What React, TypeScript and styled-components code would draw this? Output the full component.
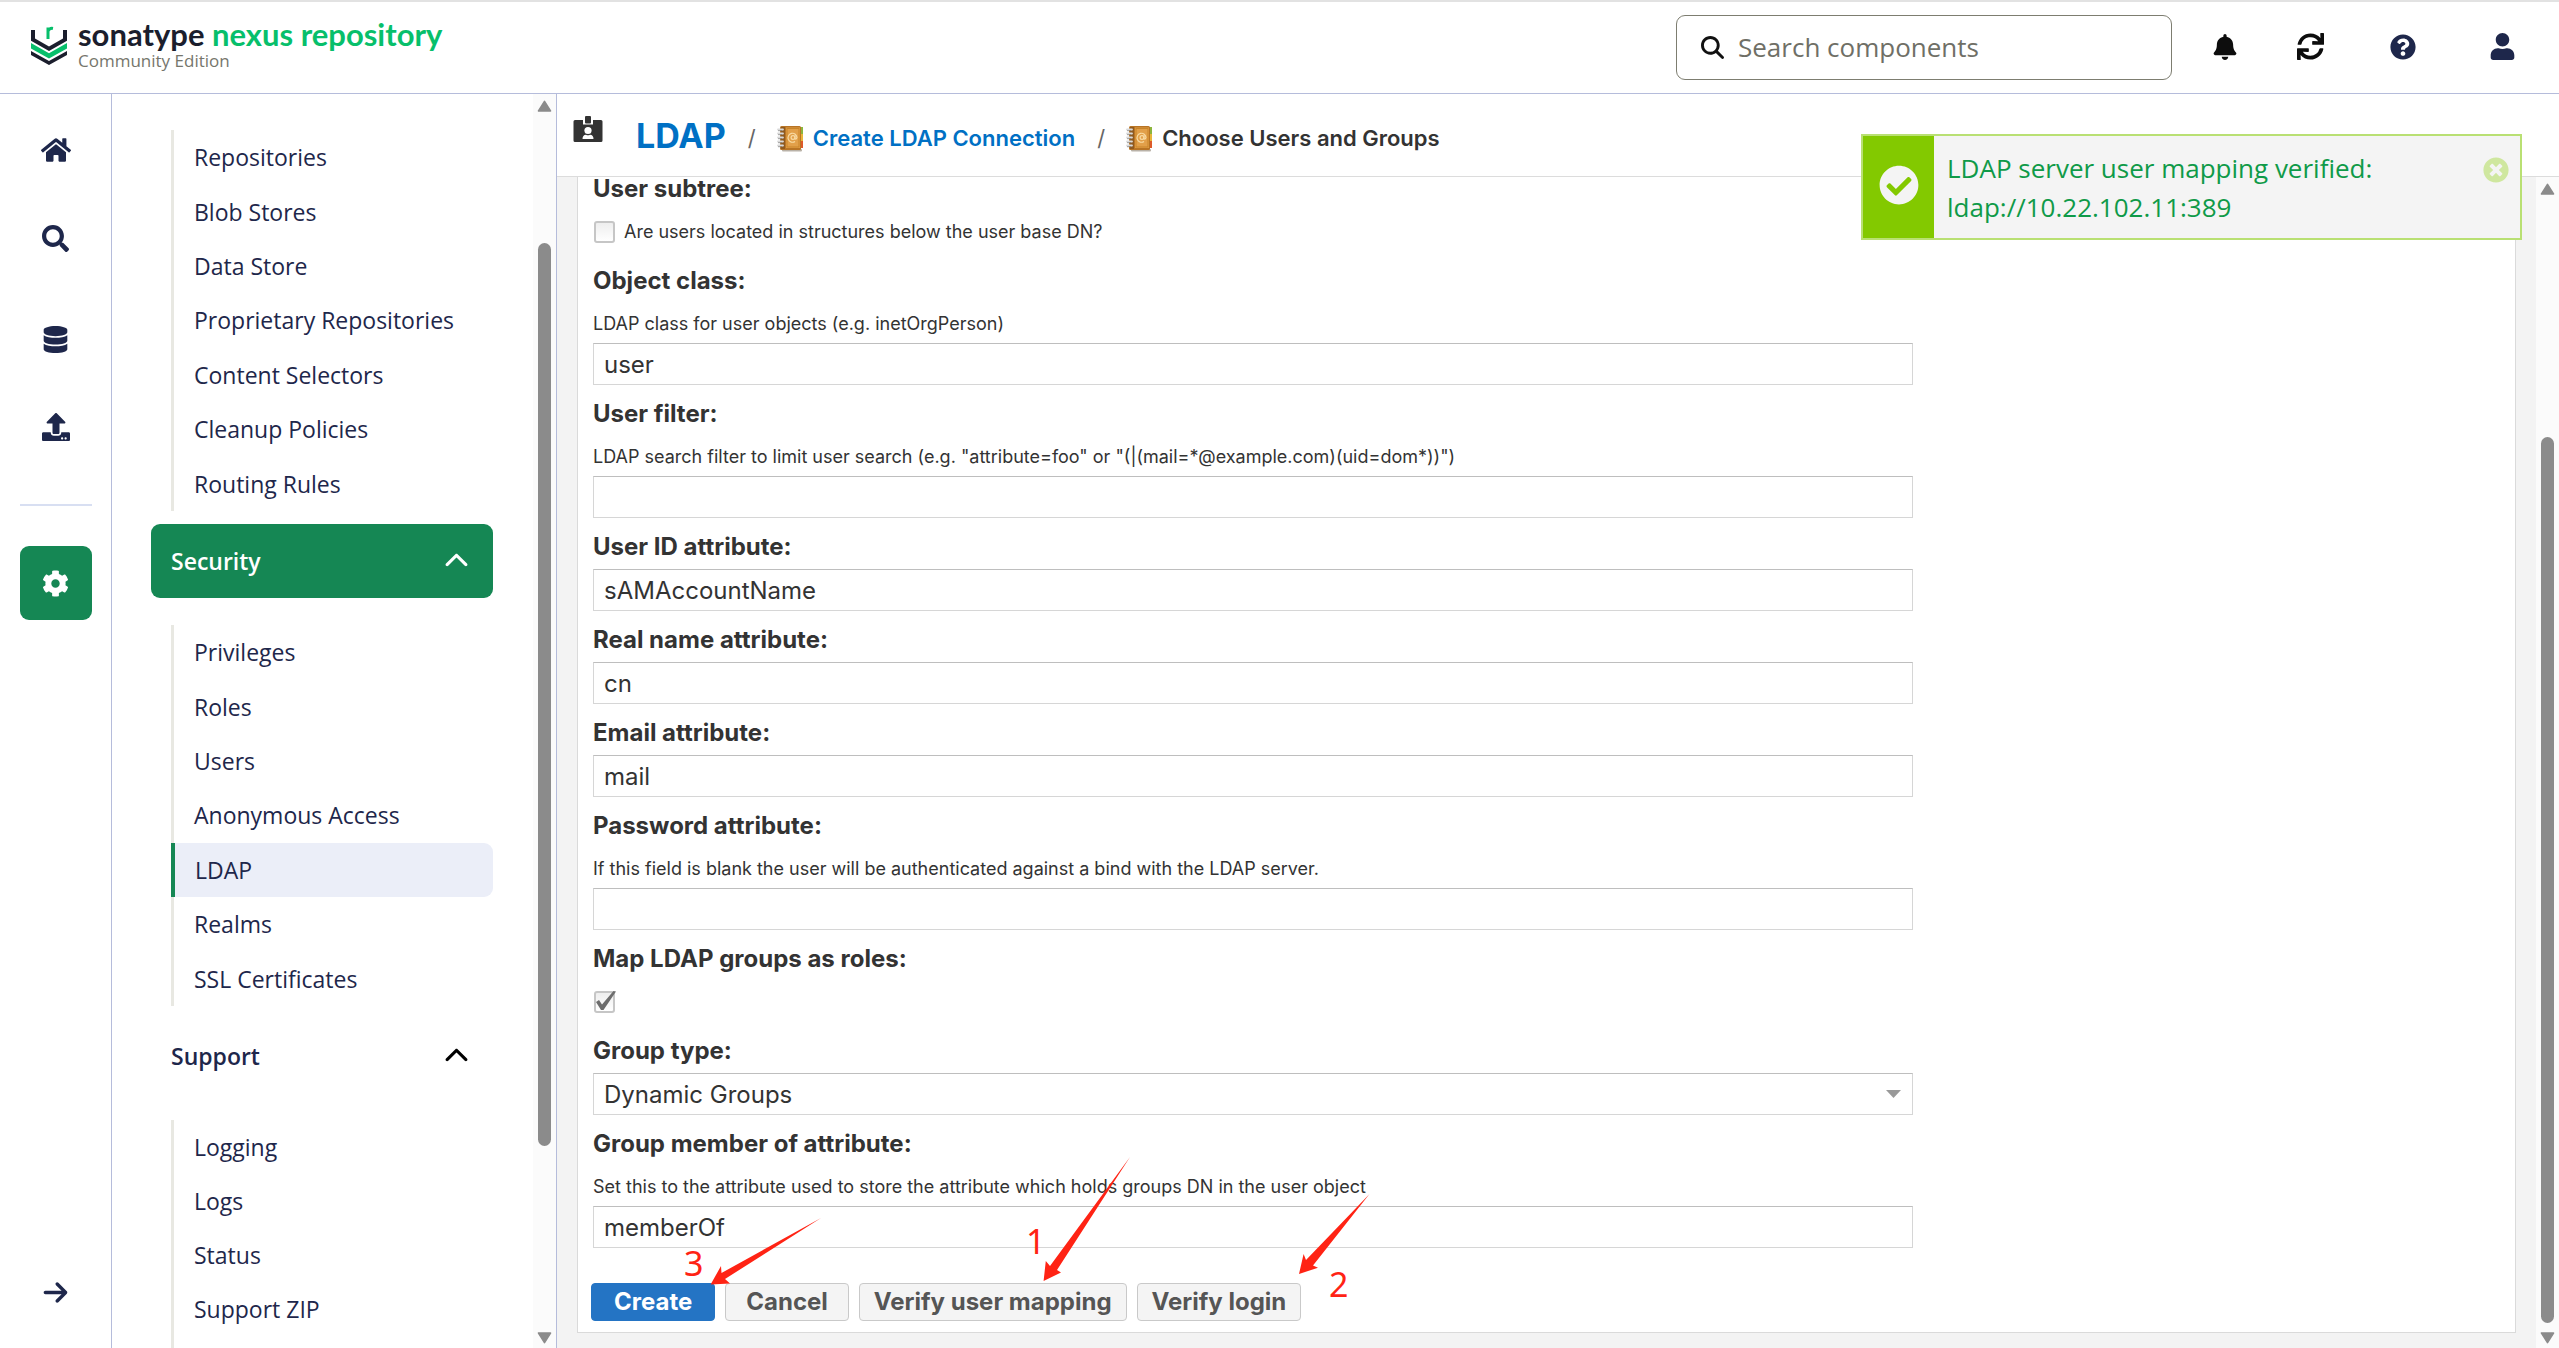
import React from 'react';
import styled, { createGlobalStyle, css } from 'styled-components';
import {
  FaBell,
  FaCheckCircle,
  FaCog,
  FaDatabase,
  FaHome,
  FaQuestionCircle,
  FaSearch,
  FaSync,
  FaTimesCircle,
  FaUpload,
  FaUser,
} from 'react-icons/fa';
import { FaArrowRight, FaChevronUp, FaMagnifyingGlass } from 'react-icons/fa6';

const sans = `'Open Sans', 'Noto Sans', sans-serif`;
const form = `Inter, 'Open Sans', sans-serif`;
const brand = `Lato, 'Open Sans', sans-serif`;

const navy = '#1e274b';
const green = '#158754';
const line = '#b5bcdb';

const GlobalStyle = createGlobalStyle`
  *, *::before, *::after { box-sizing: border-box; }
  body { margin: 0; background: #fff; font-family: ${sans}; overflow: hidden; }
  button, input, select { font: inherit; color: inherit; margin: 0; }
  a { text-decoration: none; color: inherit; }
  ul, ol { list-style: none; margin: 0; padding: 0; }
`;

const Page = styled.div`
  display: flex;
  flex-direction: column;
  height: 100vh;
  border-top: 2px solid #e2e2e2;
`;

/* ---------- top bar ---------- */

const TopBar = styled.header`
  display: flex;
  align-items: center;
  justify-content: space-between;
  flex: none;
  height: 92px;
  padding: 0 39px 0 30px;
  border-bottom: 1px solid ${line};
`;

const Brand = styled.a`
  display: flex;
  align-items: center;
  gap: 10px;
  padding-bottom: 8px;
`;

const BrandName = styled.div`
  font: 700 31px/34px ${brand};
  color: #1b1e2d;
  span { color: #07bf6b; }
`;

const Edition = styled.div`
  font-size: 17px;
  line-height: 20px;
  color: #76766c;
`;

const Tools = styled.div`
  display: flex;
  align-items: center;
`;

const SearchBox = styled.label`
  display: flex;
  align-items: center;
  gap: 14px;
  width: 496px;
  height: 65px;
  margin-right: 35px;
  padding: 0 24px;
  border: 1px solid #7d7d70;
  border-radius: 9px;
  color: #111;
  input {
    flex: 1;
    min-width: 0;
    padding: 0 0 2px;
    border: 0;
    outline: 0;
    background: none;
    font-size: 26px;
  }
  input::placeholder { color: #6f6f66; opacity: 1; }
`;

const IconButton = styled.button<{ $navy?: boolean; $gap?: number }>`
  display: flex;
  align-items: center;
  justify-content: center;
  width: 36px;
  height: 40px;
  margin-left: ${p => p.$gap ?? 0}px;
  padding: 0 0 2px;
  border: 0;
  background: none;
  color: ${p => (p.$navy ? navy : '#0d0d0d')};
`;

/* ---------- body ---------- */

const Body = styled.div`
  display: flex;
  flex: 1;
  min-height: 0;
`;

const Rail = styled.nav`
  display: flex;
  flex-direction: column;
  align-items: center;
  flex: none;
  width: 112px;
  padding: 19px 0 19px;
  border-right: 1px solid ${line};
`;

const RailLink = styled.a<{ $active?: boolean; $gap?: number }>`
  display: flex;
  align-items: center;
  justify-content: center;
  width: 72px;
  height: 74px;
  margin-top: ${p => p.$gap ?? 0}px;
  border-radius: 9px;
  color: ${p => (p.$active ? '#fff' : navy)};
  background: ${p => (p.$active ? green : 'transparent')};
`;

const RailRule = styled.hr`
  width: 72px;
  margin: 40px 0 0;
  border: 0;
  border-top: 2px solid #d8dff2;
`;

const RailSpacer = styled.div`
  flex: 1;
`;

const Sidebar = styled.nav`
  display: flex;
  flex: none;
  width: 445px;
  border-right: 1px solid ${line};
`;

const Menu = styled.div`
  display: flex;
  flex-direction: column;
  flex: 1;
  overflow: hidden;
  padding: 36px 40px 0 39px;
`;

const MenuList = styled.ul<{ $open?: boolean }>`
  display: grid;
  grid-auto-rows: ${p => (p.$open ? '54px' : '1fr')};
  flex: ${p => (p.$open ? '1 0 auto' : '0 0 381px')};
  margin-left: 20px;
  border-left: 3px solid #e8e8e2;
`;

const MenuLink = styled.a<{ $active?: boolean }>`
  display: flex;
  align-items: center;
  height: 100%;
  padding: 0 0 0 20px;
  font-size: 23px;
  color: ${navy};
  ${p =>
    p.$active &&
    css`
      margin-left: -3px;
      border-left: 4px solid ${green};
      border-radius: 0 9px 9px 0;
      background: #ebeef8;
      font-weight: 500;
    `}
`;

const MenuHeader = styled.button<{ $active?: boolean }>`
  display: flex;
  align-items: center;
  justify-content: space-between;
  flex: none;
  height: 74px;
  margin: 13px 0 27px;
  padding: 0 24px 0 20px;
  border: 0;
  border-radius: 9px;
  font-size: 23px;
  font-weight: 600;
  color: ${p => (p.$active ? '#fff' : navy)};
  background: ${p => (p.$active ? green : 'none')};
  svg { color: ${p => (p.$active ? '#fff' : '#000')}; }
`;

/* ---------- scrollbars ---------- */

const Track = styled.div`
  display: flex;
  flex-direction: column;
  align-items: center;
  flex: none;
  width: 23px;
  padding: 6px 0 4px;
  background: #fbfbfb;
`;

const Thumb = styled.div<{ $grow: number }>`
  flex: ${p => p.$grow} 0 0;
  width: 13px;
  border-radius: 7px;
  background: #8b8b8b;
`;

const TrackGap = styled.div<{ $grow: number }>`
  flex: ${p => p.$grow} 0 0;
`;

const TrackArrow = ({ down }: { down?: boolean }) => (
  <svg width="15" height="12" viewBox="0 0 15 12" aria-hidden="true">
    <path
      d={down ? 'M1.5 1h12L7.5 10.6z' : 'M1.5 11h12L7.5 1.4z'}
      fill="#8b8b8b"
      stroke="#8b8b8b"
      strokeWidth="1.6"
      strokeLinejoin="round"
    />
  </svg>
);

const Scrollbar = ({ before, size, after }: { before: number; size: number; after: number }) => (
  <Track>
    <TrackArrow />
    <TrackGap $grow={before} />
    <Thumb $grow={size} />
    <TrackGap $grow={after} />
    <TrackArrow down />
  </Track>
);

/* ---------- content ---------- */

const Content = styled.main`
  position: relative;
  display: flex;
  flex-direction: column;
  flex: 1;
  min-width: 0;
  font-family: ${form};
  color: #333;
`;

const Crumbs = styled.header`
  flex: none;
  height: 83px;
  padding-left: 16px;
  border-bottom: 1px solid #dcdcdc;
  ol { display: flex; align-items: center; height: 88px; }
  li { display: flex; align-items: center; font-size: 22px; font-weight: 600; }
  li + li::before {
    content: '/';
    width: 8px;
    margin: 0 21px 0 22px;
    font-weight: 400;
    color: #666;
  }
`;

const Title = styled.h1`
  display: flex;
  align-items: center;
  gap: 33px;
  margin: 0 0 5px;
  font-size: 34px;
  line-height: 40px;
  > svg { align-self: flex-start; }
`;

const CrumbLink = styled.a`
  color: #0070c4;
`;

const CrumbIcon = styled.span`
  display: flex;
  margin-right: 9px;
`;

const Scroller = styled.div`
  display: flex;
  flex: 1;
  min-height: 0;
`;

const Viewport = styled.div`
  display: flex;
  flex-direction: column;
  justify-content: flex-end;
  flex: 1;
  min-width: 0;
  overflow: hidden;
  padding: 0 20px 15px 20px;
  background: #f3f3f3;
`;

const Panel = styled.form`
  flex: none;
  padding: 12px 602px 11px 15px;
  border: 1px solid #dadada;
  background: #fff;
`;

const Field = styled.div`
  display: flex;
  flex-direction: column;
  margin-bottom: 13px;
`;

const Label = styled.label`
  height: 38px;
  padding-top: 4px;
  font-size: 24px;
  line-height: 24px;
  font-weight: 700;
`;

const Help = styled.span`
  padding-top: 2px;
  font-size: 18px;
  line-height: 38px;
  white-space: nowrap;
`;

const boxed = css`
  width: 100%;
  height: 42px;
  padding: 0 10px;
  border: 1px solid #d6d6d6;
  border-top-color: #bebebe;
  border-radius: 0;
  outline: 0;
  background: #fff;
  font-size: 24px;
`;

const TextInput = styled.input`
  ${boxed}
`;

const SelectWrap = styled.div`
  display: grid;
  align-items: center;
  > * { grid-area: 1 / 1; }
  svg { justify-self: end; margin-right: 12px; pointer-events: none; }
`;

const Select = styled.select`
  ${boxed}
  appearance: none;
`;

const CheckRow = styled.label`
  display: flex;
  align-items: center;
  gap: 8px;
  height: 41px;
  font-size: 18px;
  white-space: nowrap;
`;

const CheckBox = styled.span`
  display: grid;
  width: 23px;
  height: 24px;
  > * { grid-area: 1 / 1; }
  input {
    appearance: none;
    align-self: center;
    justify-self: center;
    width: 21px;
    height: 22px;
    border: 2px solid #c6c6c6;
    border-radius: 3px;
    background: linear-gradient(#eee, #fff);
  }
  svg { pointer-events: none; overflow: visible; }
`;

const Actions = styled.div`
  display: flex;
  gap: 10px;
  margin: 35px 0 0 -2px;
`;

const Button = styled.button<{ $primary?: boolean; $pad: number }>`
  height: 38px;
  padding: 0 ${p => p.$pad}px;
  border: 1px solid ${p => (p.$primary ? '#2474c4' : '#c9c9c9')};
  border-radius: 4px;
  background: ${p => (p.$primary ? '#2474c4' : '#f4f4f4')};
  color: ${p => (p.$primary ? '#fff' : '#555')};
  font-size: 24px;
  line-height: 34px;
  font-weight: 700;
  white-space: nowrap;
`;

/* ---------- notification ---------- */

const Toast = styled.div`
  position: absolute;
  top: 40px;
  right: 37px;
  display: flex;
  width: 661px;
  height: 106px;
  border: 2px solid #b9e073;
  background: #f4f4f4;
  font: 26px/39px ${sans};
  color: #0f9a48;
`;

const ToastMark = styled.div`
  display: flex;
  align-items: center;
  justify-content: center;
  width: 71px;
  padding-bottom: 5px;
  color: #f4f4f4;
  background: #83c900;
`;

const ToastText = styled.p`
  flex: 1;
  margin: 0;
  padding: 13px;
  white-space: pre-line;
`;

const ToastClose = styled.button`
  align-self: flex-start;
  display: flex;
  margin: 21px 11px 0 0;
  padding: 0;
  border: 0;
  background: none;
  color: #cfe79f;
`;

/* ---------- annotations ---------- */

const Marks = styled.svg`
  position: absolute;
  left: 0;
  bottom: 0;
  pointer-events: none;
  fill: #ff2314;
  font: 34px 'Noto Sans', sans-serif;
`;

const LogoMark = () => (
  <svg width="38" height="42" viewBox="0 0 38 42" aria-hidden="true">
    <path d="M1 7h4v8.500l14 8 14-8V7h4v10.800L19 28 1 17.800z" fill="#1b1e2d" />
    <path d="M1 20 19 30.200 37 20v5.500L19 35.600 1 25.500z" fill="#07bf6b" />
    <path d="M1 28 19 38 37 28v4L19 42 1 32z" fill="#1b1e2d" />
    <path d="M18 16V4.500M18 8q1.500-3.200 5-2.600" fill="none" stroke="#07bf6b" strokeWidth="3" />
  </svg>
);

const BadgeIcon = () => (
  <svg width="30" height="27" viewBox="0 0 30 27" aria-hidden="true">
    <path
      d="M2 4h8v4.500h10V4h8a1.500 1.500 0 0 1 1.500 1.500v19A1.500 1.500 0 0 1 28 26H2A1.500 1.500 0 0 1 .5 24.500v-19A1.500 1.500 0 0 1 2 4z"
      fill="#333"
    />
    <rect x="12" y="0" width="6" height="7.500" rx="1" fill="#333" />
    <circle cx="15" cy="14.500" r="3.600" fill="#fff" />
    <path d="M9.500 23q0-4 3.500-4.200 2 1 4 0 3.500.2 3.500 4.200z" fill="#fff" />
  </svg>
);

const BookIcon = () => (
  <svg width="27" height="27" viewBox="0 0 27 27" aria-hidden="true">
    <rect x="5" y="24" width="20" height="2.500" rx="1" fill="#b9b2a8" />
    <path d="M22 2h4v7h-4z" fill="#8cb53c" />
    <path d="M22 9h4v7h-4z" fill="#e8b53a" />
    <path d="M22 16h4v7h-4z" fill="#dd5a2a" />
    <rect x="3" y="1" width="21" height="24" rx="1.500" fill="#b87425" />
    <rect x="4" y="2" width="4" height="22" fill="#8f5a20" />
    <rect x="9" y="2.500" width="14" height="20.500" fill="#e2a04a" />
    <rect x="10" y="3.500" width="12" height="18.500" fill="none" stroke="#c98428" />
    <circle cx="16" cy="12.500" r="1.900" fill="none" stroke="#f8dba4" strokeWidth="1.200" />
    <path d="M18 10.500v3q1 1.500 2-1a4.500 4.500 0 1 0-2 4" fill="none" stroke="#f8dba4" strokeWidth="1.200" />
    <path d="M1 4.500h5M1 8.500h5M1 12.500h5M1 16.500h5M1 20.500h5" stroke="#d9d9d9" strokeWidth="1.800" strokeLinecap="round" />
    <path d="M1 5.700h4M1 9.700h4M1 13.700h4M1 17.700h4M1 21.700h4" stroke="#777" strokeWidth=".7" />
  </svg>
);

const CheckStroke = () => (
  <svg width="23" height="24" viewBox="0 0 23 24" aria-hidden="true">
    <path d="M3 12 6 10 9 14.500 20.500 1 23 1.500 10.500 20 8 20z" fill="#6d6d6d" />
  </svg>
);

const repositoryItems = [
  'Repositories',
  'Blob Stores',
  'Data Store',
  'Proprietary Repositories',
  'Content Selectors',
  'Cleanup Policies',
  'Routing Rules',
];
const securityItems = ['Privileges', 'Roles', 'Users', 'Anonymous Access', 'LDAP', 'Realms', 'SSL Certificates'];
const supportItems = ['Logging', 'Logs', 'Status', 'Support ZIP'];

const MenuItems = ({ items, active, open }: { items: string[]; active?: string; open?: boolean }) => (
  <MenuList $open={open}>
    {items.map(item => (
      <li key={item}>
        <MenuLink href="#" $active={item === active}>
          {item}
        </MenuLink>
      </li>
    ))}
  </MenuList>
);

const TextField = ({ id, label, help, value = '' }: { id: string; label: string; help?: string; value?: string }) => (
  <Field>
    <Label htmlFor={id}>{label}</Label>
    {help && <Help id={`${id}-help`}>{help}</Help>}
    <TextInput id={id} defaultValue={value} aria-describedby={help ? `${id}-help` : undefined} />
  </Field>
);

const CheckField = ({ id, label, text, checked }: { id: string; label: string; text?: string; checked?: boolean }) => (
  <Field>
    <Label htmlFor={id}>{label}</Label>
    <CheckRow htmlFor={id}>
      <CheckBox>
        <input id={id} type="checkbox" defaultChecked={checked} />
        {checked && <CheckStroke />}
      </CheckBox>
      {text}
    </CheckRow>
  </Field>
);

export default function App() {
  return (
    <Page>
      <GlobalStyle />
      <TopBar>
        <Brand href="#">
          <LogoMark />
          <div>
            <BrandName>
              sonatype <span>nexus repository</span>
            </BrandName>
            <Edition>Community Edition</Edition>
          </div>
        </Brand>
        <Tools>
          <SearchBox>
            <FaMagnifyingGlass size={23} />
            <input type="search" placeholder="Search components" aria-label="Search components" />
          </SearchBox>
          <IconButton aria-label="Notifications">
            <FaBell size={26} />
          </IconButton>
          <IconButton aria-label="Refresh" $gap={49}>
            <FaSync size={27} />
          </IconButton>
          <IconButton aria-label="Help" $navy $gap={57}>
            <FaQuestionCircle size={26} />
          </IconButton>
          <IconButton aria-label="Account" $navy $gap={63}>
            <FaUser size={27} />
          </IconButton>
        </Tools>
      </TopBar>

      <Body>
        <Rail aria-label="Main">
          <RailLink href="#" aria-label="Home">
            <FaHome size={30} />
          </RailLink>
          <RailLink href="#" aria-label="Search" $gap={14}>
            <FaSearch size={27} />
          </RailLink>
          <RailLink href="#" aria-label="Browse" $gap={27}>
            <FaDatabase size={27} />
          </RailLink>
          <RailLink href="#" aria-label="Upload" $gap={14}>
            <FaUpload size={28} />
          </RailLink>
          <RailRule />
          <RailLink href="#" aria-label="Settings" $active $gap={40}>
            <FaCog size={27} />
          </RailLink>
          <RailSpacer />
          <RailLink href="#" aria-label="Expand">
            <FaArrowRight size={27} />
          </RailLink>
        </Rail>

        <Sidebar aria-label="Settings">
          <Menu>
            <MenuItems items={repositoryItems} />
            <MenuHeader $active>
              Security
              <FaChevronUp size={25} />
            </MenuHeader>
            <MenuItems items={securityItems} active="LDAP" />
            <MenuHeader>
              Support
              <FaChevronUp size={25} />
            </MenuHeader>
            <MenuItems items={supportItems} open />
          </Menu>
          <Scrollbar before={131} size={903} after={186} />
        </Sidebar>

        <Content>
          <Crumbs>
            <ol>
              <li>
                <Title>
                  <BadgeIcon />
                  <CrumbLink href="#">LDAP</CrumbLink>
                </Title>
              </li>
              <li>
                <CrumbIcon>
                  <BookIcon />
                </CrumbIcon>
                <CrumbLink href="#">Create LDAP Connection</CrumbLink>
              </li>
              <li>
                <CrumbIcon>
                  <BookIcon />
                </CrumbIcon>
                Choose Users and Groups
              </li>
            </ol>
          </Crumbs>

          <Scroller>
            <Viewport>
              <Panel>
                <CheckField
                  id="user-subtree"
                  label="User subtree:"
                  text="Are users located in structures below the user base DN?"
                />
                <TextField
                  id="object-class"
                  label="Object class:"
                  help="LDAP class for user objects (e.g. inetOrgPerson)"
                  value="user"
                />
                <TextField
                  id="user-filter"
                  label="User filter:"
                  help={'LDAP search filter to limit user search (e.g. "attribute=foo" or "(|(mail=*@example.com)(uid=dom*))")'}
                />
                <TextField id="user-id" label="User ID attribute:" value="sAMAccountName" />
                <TextField id="real-name" label="Real name attribute:" value="cn" />
                <TextField id="email" label="Email attribute:" value="mail" />
                <TextField
                  id="password"
                  label="Password attribute:"
                  help="If this field is blank the user will be authenticated against a bind with the LDAP server."
                />
                <CheckField id="map-groups" label="Map LDAP groups as roles:" checked />
                <Field>
                  <Label htmlFor="group-type">Group type:</Label>
                  <SelectWrap>
                    <Select id="group-type">
                      <option>Dynamic Groups</option>
                    </Select>
                    <svg width="15" height="8" viewBox="0 0 15 8" aria-hidden="true">
                      <path d="M0 0h15L7.500 8z" fill="#999" />
                    </svg>
                  </SelectWrap>
                </Field>
                <TextField
                  id="member-of"
                  label="Group member of attribute:"
                  help="Set this to the attribute used to store the attribute which holds groups DN in the user object"
                  value="memberOf"
                />
                <Actions>
                  <Button type="button" $primary $pad={22}>
                    Create
                  </Button>
                  <Button type="button" $pad={20}>
                    Cancel
                  </Button>
                  <Button type="button" $pad={14}>
                    Verify user mapping
                  </Button>
                  <Button type="button" $pad={14}>
                    Verify login
                  </Button>
                </Actions>
              </Panel>
            </Viewport>
            <Scrollbar before={242} size={884} after={9} />
          </Scroller>

          <Toast role="status">
            <ToastMark>
              <FaCheckCircle size={40} />
            </ToastMark>
            <ToastText>{'LDAP server user mapping verified:\nldap://10.22.102.11:389'}</ToastText>
            <ToastClose aria-label="Dismiss">
              <FaTimesCircle size={26} />
            </ToastClose>
          </Toast>

          <Marks width="843" height="208" viewBox="557 1140 843 208" aria-hidden="true">
            <path d="M1130 1157 1057 1270 1061 1272.500 1043.600 1281 1045.800 1261 1050 1266z" />
            <path d="M821 1218 725 1279 730 1283.500 710.600 1284.500 721 1266 721.500 1273z" />
            <path d="M1369.500 1194 1313 1265.500 1318 1267.700 1299 1274 1303.600 1254 1306 1260z" />
            <text x="1026" y="1254">1</text>
            <text x="1329" y="1297">2</text>
            <text x="684" y="1276">3</text>
          </Marks>
        </Content>
      </Body>
    </Page>
  );
}
